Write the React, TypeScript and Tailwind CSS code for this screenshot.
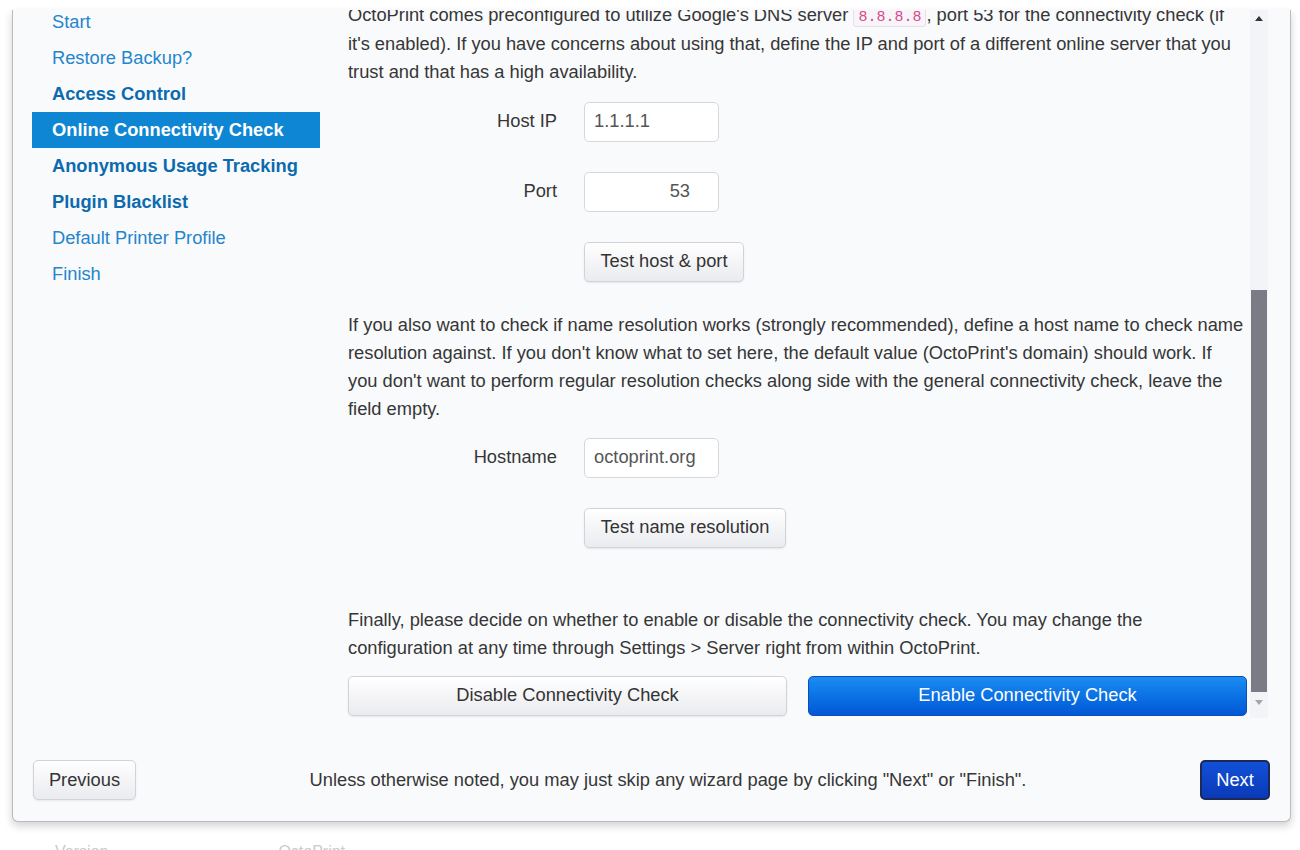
const navItems = [
  { label: "Start", bold: false },
  { label: "Restore Backup?", bold: false },
  { label: "Access Control", bold: true },
  { label: "Online Connectivity Check", bold: true, active: true },
  { label: "Anonymous Usage Tracking", bold: true },
  { label: "Plugin Blacklist", bold: true },
  { label: "Default Printer Profile", bold: false },
  { label: "Finish", bold: false },
];

const Field = ({ label, value, right }: { label: string; value: string; right?: boolean }) => (
  <div className="flex items-center">
    <label className="w-[209px] text-right">{label}</label>
    <div
      className={
        "ml-[27px] flex h-[40px] w-[135px] items-center rounded-[5px] border border-[#d6d8de] bg-white text-[#555] " +
        (right ? "justify-end pr-[28px]" : "pl-[9px]")
      }
    >
      {value}
    </div>
  </div>
);

const GrayButton = ({ children, className }: { children: React.ReactNode; className?: string }) => (
  <button
    className={
      "flex h-[40px] items-center justify-center rounded-[5px] border border-[#d2d3d9] bg-linear-to-b from-white to-[#eaebef] text-[#333] shadow-[0_1px_2px_rgba(0,0,0,0.08)] " +
      (className ?? "")
    }
  >
    {children}
  </button>
);

export default function App() {
  return (
    <div className="h-[850px] w-[1300px] overflow-hidden bg-white pt-[10px] font-['Liberation_Sans',Arial,sans-serif] text-[18.3px] text-[#363636]">
      <div className="ml-[12px] w-[1279px] rounded-b-[6px] border-x border-b border-[#b9bac2] bg-[#f9fafc] shadow-[0_4px_8px_rgba(0,0,0,0.18)]">
        <div className="flex h-[708px] overflow-hidden">
          <ul className="-mt-[6px] ml-[19px] w-[288px] shrink-0">
            {navItems.map((item) => (
              <li
                key={item.label}
                className={
                  "h-[36px] pl-[20px] leading-[36px] " +
                  (item.active
                    ? "bg-[#0e86d4] font-bold text-white"
                    : item.bold
                      ? "font-bold text-[#0c6aae]"
                      : "text-[#2585cc]")
                }
              >
                {item.label}
              </li>
            ))}
          </ul>

          <div className="-mt-[9px] ml-[28px] w-[900px] shrink-0 leading-[28.5px]">
            <p>
              OctoPrint comes preconfigured to utilize Google's DNS server{" "}
              <code className="rounded-[3px] border border-[#ecdde6] bg-[#f7f5f9] px-[4px] font-['Liberation_Mono',monospace] text-[15px] leading-none text-[#d84a8a]">
                8.8.8.8
              </code>
              , port 53 for the connectivity check (if
              <br />
              it's enabled). If you have concerns about using that, define the IP and port of a different online server that you
              <br />
              trust and that has a high availability.
            </p>

            <div className="mt-[15px] flex flex-col gap-[30px]">
              <Field label="Host IP" value="1.1.1.1" />
              <Field label="Port" value="53" right />
              <GrayButton className="ml-[236px] w-[160px]">Test host &amp; port</GrayButton>
            </div>

            <p className="mt-[29px] leading-[28px]">
              If you also want to check if name resolution works (strongly recommended), define a host name to check name
              <br />
              resolution against. If you don't know what to set here, the default value (OctoPrint's domain) should work. If
              <br />
              you don't want to perform regular resolution checks along side with the general connectivity check, leave the
              <br />
              field empty.
            </p>

            <div className="mt-[15px] flex flex-col gap-[30px]">
              <Field label="Hostname" value="octoprint.org" />
              <GrayButton className="ml-[236px] w-[202px]">Test name resolution</GrayButton>
            </div>

            <p className="mt-[58px] leading-[28px]">
              Finally, please decide on whether to enable or disable the connectivity check. You may change the
              <br />
              configuration at any time through Settings &gt; Server right from within OctoPrint.
            </p>

            <div className="mt-[14px] flex gap-[21px]">
              <GrayButton className="w-[439px]">Disable Connectivity Check</GrayButton>
              <button className="flex h-[40px] w-[439px] items-center justify-center rounded-[5px] border border-[#0a4fb8] bg-linear-to-b from-[#1b8cf2] to-[#0557d6] text-white">
                Enable Connectivity Check
              </button>
            </div>
          </div>

          <div className="ml-[2px] flex w-[18px] shrink-0 flex-col items-center bg-[#f3f4f8]">
            <div className="flex h-[16px] items-center justify-center">
              <svg width="8" height="5" viewBox="0 0 8 5">
                <path d="M4 0L8 5H0Z" fill="#333" />
              </svg>
            </div>
            <div className="h-[264px]" />
            <div className="h-[402px] w-[16px] bg-[#7b7b85]" />
            <div className="flex h-[20px] items-center justify-center">
              <svg width="8" height="5" viewBox="0 0 8 5">
                <path d="M0 0H8L4 5Z" fill="#a5a6ad" />
              </svg>
            </div>
          </div>
        </div>

        <div className="flex items-center pb-[21px] pl-[20px] pr-[20px] pt-[42px]">
          <GrayButton className="w-[103px]">Previous</GrayButton>
          <p className="flex-1 text-center">
            Unless otherwise noted, you may just skip any wizard page by clicking "Next" or "Finish".
          </p>
          <button className="flex h-[40px] w-[70px] items-center justify-center rounded-[5px] border-2 border-[#1d2a58] bg-linear-to-b from-[#1250d8] to-[#0a3ab8] text-white">
            Next
          </button>
        </div>
      </div>

      <div className="mt-[18px] flex gap-[170px] pl-[55px] text-[16px] text-[#c9cad2]">
        <span>Version</span>
        <span>OctoPrint</span>
      </div>
    </div>
  );
}
